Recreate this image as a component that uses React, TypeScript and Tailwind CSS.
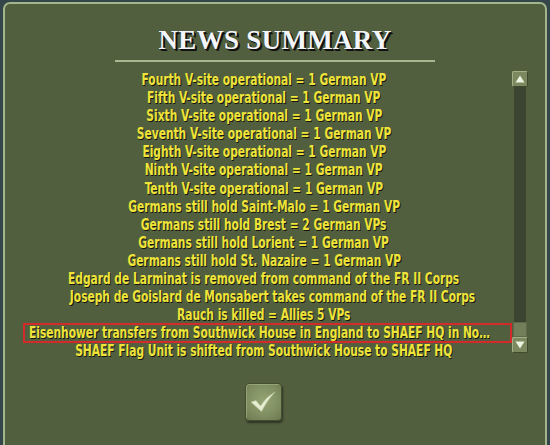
import React from "react";

type NewsLine = {
  text: string;
  selected?: boolean;
};

const news: NewsLine[] = [
  { text: "Fourth V-site operational = 1 German VP" },
  { text: "Fifth V-site operational = 1 German VP" },
  { text: "Sixth V-site operational = 1 German VP" },
  { text: "Seventh V-site operational = 1 German VP" },
  { text: "Eighth V-site operational = 1 German VP" },
  { text: "Ninth V-site operational = 1 German VP" },
  { text: "Tenth V-site operational = 1 German VP" },
  { text: "Germans still hold Saint-Malo = 1 German VP" },
  { text: "Germans still hold Brest = 2 German VPs" },
  { text: "Germans still hold Lorient = 1 German VP" },
  { text: "Germans still hold St. Nazaire = 1 German VP" },
  { text: "Edgard de Larminat is removed from command of the FR II Corps" },
  { text: "Joseph de Goislard de Monsabert takes command of the FR II Corps" },
  { text: "Rauch is killed = Allies 5 VPs" },
  {
    text: "Eisenhower transfers from Southwick House in England to SHAEF HQ in Normandy",
    selected: true,
  },
  { text: "SHAEF Flag Unit is shifted from Southwick House to SHAEF HQ" },
];

const ScrollButton = ({ dir }: { dir: "up" | "down" }) => (
  <div className="w-[16px] h-[16px] flex items-center justify-center bg-[#7b895f] border border-t-[#a3b087] border-l-[#a3b087] border-r-[#3f4a2e] border-b-[#3f4a2e] rounded-[2px]">
    <svg width="10" height="8" viewBox="0 0 10 8">
      {dir === "up" ? (
        <polygon points="5,0.5 9.5,7.5 0.5,7.5" fill="#eef2e2" />
      ) : (
        <polygon points="0.5,0.5 9.5,0.5 5,7.5" fill="#eef2e2" />
      )}
    </svg>
  </div>
);

const Scrollbar = () => (
  <div className="w-[16px] flex flex-col items-center mt-[1px]">
    <ScrollButton dir="up" />
    <div className="w-[12px] h-[235px] bg-[#3a4430]" />
    <div className="w-[14px] h-[15px] bg-[#727f5a] border border-[#5d6a48]" />
    <ScrollButton dir="down" />
  </div>
);

const OkButton = () => (
  <button className="w-[37px] h-[38px] rounded-[4px] flex items-center justify-center bg-[radial-gradient(circle_at_50%_45%,#95a474_0%,#7f8e60_60%,#6a7850_100%)] border border-[#434e32] shadow-[1px_2px_2px_rgba(0,0,0,0.45),inset_1px_1px_0_rgba(200,215,170,0.35)]">
    <svg width="26" height="22" viewBox="0 0 26 22">
      <path
        d="M1 11 L6 9.5 L10.5 15 Q16 6 25 1 Q17.5 8.5 11.5 20.5 Z"
        fill="#e6eed2"
        stroke="#b9c79c"
        strokeWidth="0.6"
      />
    </svg>
  </button>
);

export default function App() {
  return (
    <div className="w-[550px] h-[445px] overflow-hidden bg-[#34464a] pt-[2px] px-[3px]">
      <div className="h-[460px] rounded-[7px] border-2 border-[#a3b58a] bg-[#515f3e] flex flex-col">
        <h1
          className="mt-[19px] text-center text-[27px] leading-[34px] font-bold tracking-[0.3px] text-[#f2f6fa] [text-shadow:2px_2px_0_#111,1px_1px_0_#111]"
          style={{ fontFamily: '"Liberation Serif", "DejaVu Serif", serif' }}
        >
          NEWS SUMMARY
        </h1>
        <div className="mx-auto mt-[3px] w-[320px] h-[2px] bg-[#a9b78e]" />

        <div className="flex mt-[8px] pl-[11px]">
          <div className="w-[496px] flex flex-col items-center">
            <ul
              className="w-full pt-[1px] text-[15px] font-bold leading-[18.1px] text-[#eee43a] [text-shadow:1px_1px_0_#141410]"
              style={{ fontFamily: '"DejaVu Sans Condensed", "DejaVu Sans", sans-serif' }}
            >
              {news.map((line) =>
                line.selected ? (
                  <li
                    key={line.text}
                    className="ml-[7px] w-[489px] h-[20px] -my-[1px] border-2 border-[#d42a2c] pl-[4px] overflow-hidden leading-[16px]"
                  >
                    <span className="block w-[585px] origin-left scale-x-[0.79] truncate">
                      {line.text}
                    </span>
                  </li>
                ) : (
                  <li key={line.text} className="text-center whitespace-nowrap">
                    <span className="inline-block scale-x-[0.79]">{line.text}</span>
                  </li>
                )
              )}
            </ul>
            <div className="mt-[23px] -ml-[2px]">
              <OkButton />
            </div>
          </div>
          <Scrollbar />
        </div>
      </div>
    </div>
  );
}
